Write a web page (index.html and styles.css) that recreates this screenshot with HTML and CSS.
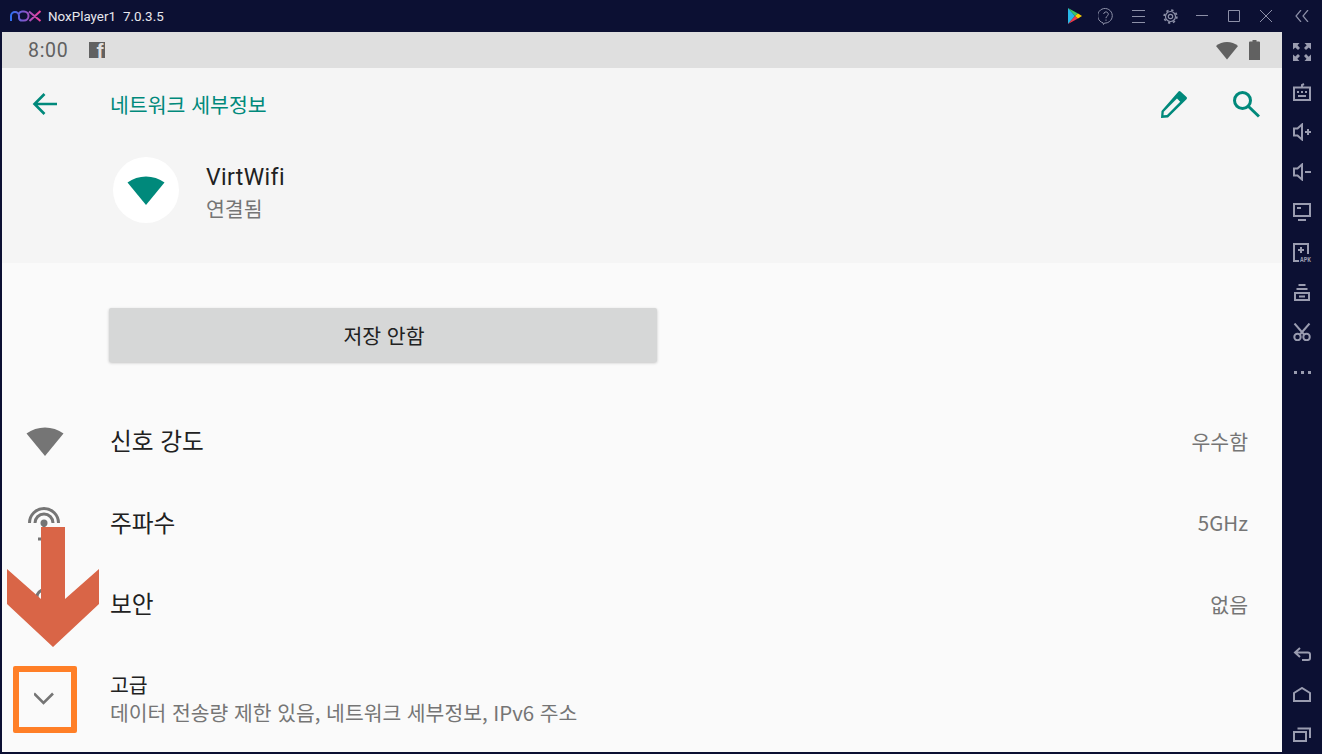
FILE: index.html
```html
<!DOCTYPE html>
<html lang="ko">
<head>
<meta charset="utf-8">
<title>NoxPlayer1</title>
<link rel="stylesheet" href="styles.css">
</head>
<body>
<div class="window">
  <header class="titlebar">
    <div class="brand">
      <svg class="logo" width="32" height="12" viewBox="0 0 32 12" fill="none" stroke-width="2"><defs><linearGradient id="lg" x1="0" x2="1" y1="0" y2="0"><stop offset="0" stop-color="#2f6ff0"/><stop offset=".5" stop-color="#8a55c8"/><stop offset="1" stop-color="#f0409a"/></linearGradient></defs><path d="M1 11V6a4 4 0 0 1 8 0v2a3 3 0 0 0 3 2.500h2a4 4 0 0 0 0-9h-2a3.500 3.500 0 0 0-3 2M19 1.500 30.500 11M30.500 1 19.500 11" stroke="url(#lg)"/></svg>
      <span class="brand-name">NoxPlayer1</span>
      <span class="brand-ver">7.0.3.5</span>
    </div>
    <div class="win-controls">
      <svg class="wc" width="14" height="16" viewBox="0 0 14 16"><path d="M0 0l7 8-7 8z" fill="#28b8e8"/><path d="M0 0l10 5.500L7 8z" fill="#3cc66a"/><path d="M0 16l10-5.500L7 8z" fill="#ee3c4c"/><path d="M10 5.500L14 8l-4 2.500L7 8z" fill="#fcd000"/></svg>
      <svg class="wc" width="16" height="17" viewBox="0 0 16 17" fill="none" stroke="#8d90a8" stroke-width="1"><path d="M5 14.800A7.300 7.300 0 1 1 8 15H6.500l-1 1.500z"/><path d="M5.700 6a2.300 2.300 0 1 1 3.400 2.200c-.8.500-1.100 1-1.100 2M8 11.500v1.300"/></svg>
      <svg class="wc" width="13" height="13" viewBox="0 0 13 13" fill="none" stroke="#8d90a8" stroke-width="1"><path d="M0 .5h13M0 6.500h13M0 12.500h13"/></svg>
      <svg class="wc" width="15" height="15" viewBox="0 0 15 15" fill="none" stroke="#8d90a8" stroke-width="1.200"><circle cx="7.500" cy="7.500" r="2.200"/><circle cx="7.500" cy="7.500" r="5"/><circle cx="7.500" cy="7.500" r="6.400" stroke-width="1.600" stroke-dasharray="2.300 2.720"/></svg>
      <svg class="wc" width="12" height="12" viewBox="0 0 12 12" fill="none" stroke="#8d90a8"><path d="M0 5.500h12"/></svg>
      <svg class="wc" width="12" height="12" viewBox="0 0 12 12" fill="none" stroke="#8d90a8"><path d="M.5.500h11v11H.5z"/></svg>
      <svg class="wc" width="12" height="12" viewBox="0 0 12 12" fill="none" stroke="#8d90a8"><path d="M0 0l12 12M12 0L0 12"/></svg>
      <svg class="wc" width="14" height="12" viewBox="0 0 14 12" fill="none" stroke="#8d90a8" stroke-width="1.200"><path d="M6 0L1 6l5 6M13 0L8 6l5 6"/></svg>
    </div>
  </header>
  <div class="body-row">
    <main class="screen">
      <div class="status">
        <div class="status-left">
          <span class="clock">8:00</span>
          <span class="fb">f</span>
        </div>
        <div class="status-right">
          <svg width="22" height="20" viewBox="0 0 22 20"><path class="fill-dark" d="M0 6C6 .7 16 .7 22 6L11 19.500z"/></svg>
          <svg width="11" height="20" viewBox="0 0 11 20"><path class="fill-dark" d="M3.500 0h4v1.500h2.500a1 1 0 0 1 1 1V20H0V2.500a1 1 0 0 1 1-1h2.500z"/></svg>
        </div>
      </div>
      <section class="head">
        <div class="appbar">
          <svg class="back" width="26" height="24" viewBox="0 0 26 24" fill="none" stroke="#00897b" stroke-width="2.600"><path d="M25 12H3M12.500 2L2.500 12l10 10"/></svg>
          <h1 class="title">네트워크 세부정보</h1>
          <svg class="pencil" width="28" height="29" viewBox="0 0 28 29"><path d="M20.500 1.500L26.500 7a1.500 1.500 0 0 1 0 2.200L8 27.500 1 28l.5-7L18.500 1.500a1.500 1.500 0 0 1 2 0z" fill="#00897b"/><path d="M3.800 21.800L17 8.500l3.200 3.200L7 25l-3.500.3z" fill="#f5f5f5"/></svg>
          <svg class="search" width="28" height="28" viewBox="0 0 28 28" fill="none" stroke="#00897b" stroke-width="3"><circle cx="10.500" cy="10.500" r="8"/><path d="M16 16l11 10.500"/></svg>
        </div>
        <div class="net">
          <div class="net-badge"><svg width="38" height="30" viewBox="0 0 38 30"><path d="M.500 7.500C11-.5 27-.5 37.500 7.500L19 30z" fill="#00897b"/></svg></div>
          <div class="net-text">
            <div class="net-name">VirtWifi</div>
            <div class="net-state">연결됨</div>
          </div>
        </div>
      </section>
      <div class="action"><button class="btn" type="button">저장 안함</button></div>
      <ul class="rows">
        <li class="row">
          <span class="row-icon"><svg width="38" height="30" viewBox="0 0 38 30"><path d="M.500 7.500C11-.5 27-.5 37.500 7.500L19 30z" fill="#757575"/></svg></span>
          <span class="row-label">신호 강도</span>
          <span class="row-value">우수함</span>
        </li>
        <li class="row">
          <span class="row-icon"><svg width="36" height="36" viewBox="1 0 36 36" fill="none" stroke="#757575" stroke-width="3"><path d="M3.500 18a14.500 14.500 0 0 1 29 0M9 18a9 9 0 0 1 18 0"/><circle cx="18" cy="18" r="3.500" fill="#757575" stroke="none"/><path d="M18 20v14M12 34h12"/></svg></span>
          <span class="row-label">주파수</span>
          <span class="row-value">5GHz</span>
        </li>
        <li class="row">
          <span class="row-icon"><svg width="32" height="36" viewBox="1 0 32 36"><path d="M9 15v-4a7 7 0 0 1 14 0v4" fill="none" stroke="#757575" stroke-width="3"/><rect x="5" y="15" width="22" height="18" rx="2" fill="#757575"/></svg></span>
          <span class="row-label">보안</span>
          <span class="row-value">없음</span>
        </li>
        <li class="row row-adv">
          <span class="row-icon"><svg width="22" height="13" viewBox="1.500 0 22 13" fill="none" stroke="#757575" stroke-width="2.600"><path d="M1.500 1.500L11 11l9.500-9.500"/></svg></span>
          <span class="adv-text">
            <span class="adv-title">고급</span>
            <span class="adv-sub">데이터 전송량 제한 있음, 네트워크 세부정보, IPv6 주소</span>
          </span>
        </li>
      </ul>
      <div class="mark-box"></div>
      <svg class="mark-arrow" width="92" height="120" viewBox="0 0 92 120"><path d="M34 0h24v72l34-30v35l-46 43L0 77V42l34 30z" fill="#d96547"/></svg>
    </main>
    <aside class="side">
      <div class="side-group">
        <span class="slot"><svg width="18" height="18" viewBox="1 1 18 18" fill="#9a9cb0"><path d="M1 1h6.500L5.500 3.300 8 6 6 8 3.300 5.500 1 7.500zM19 1v6.500l-2.300-2L14 8l-2-2 2.700-2.700L12.500 1zM1 19v-6.500l2.300 2L6 12l2 2-2.700 2.700L7.500 19zM19 19h-6.500l2-2.300L12 14l2-2 2.700 2.700 2.300-2.200z"/></svg></span>
        <span class="slot"><svg width="18" height="18" viewBox="0 0 18 18" fill="none" stroke="#9a9cb0" stroke-width="2"><path d="M1 4.500h16V17H1zM9 4.500V2l2-1M4 9h2M8 9h2M12 9h2M5 13h8"/></svg></span>
        <span class="slot"><svg width="18" height="18" viewBox="0 0 18 18" fill="none" stroke="#9a9cb0" stroke-width="2"><path d="M1 5.500h3.500L9 1.500v15l-4.500-4H1zM12 9h6M15 6v6"/></svg></span>
        <span class="slot"><svg width="18" height="18" viewBox="0 0 18 18" fill="none" stroke="#9a9cb0" stroke-width="2"><path d="M1 5.500h3.500L9 1.500v15l-4.500-4H1zM12 9h6"/></svg></span>
        <span class="slot"><svg width="18" height="18" viewBox="0 0 18 18" fill="none" stroke="#9a9cb0" stroke-width="2"><path d="M1 1h16v12H1zM4 5h4M5 17h8"/></svg></span>
        <span class="slot"><svg class="apk" width="22" height="24" viewBox="0 0 22 24" fill="none" stroke="#9a9cb0" stroke-width="2"><path d="M15 11V1H1v17h5M8 4v6M5 7h6"/><text x="7" y="18.500" class="apk-text" textLength="11" lengthAdjust="spacingAndGlyphs">APK</text></svg></span>
        <span class="slot"><svg width="16" height="17" viewBox="0 0 16 17" fill="none" stroke="#9a9cb0" stroke-width="2"><path d="M4.500 1h7M2.500 5h11M1 9h14v7H1zM5 12.500h6"/></svg></span>
        <span class="slot"><svg width="18" height="18" viewBox="0 0 18 18" fill="none" stroke="#9a9cb0" stroke-width="2"><path d="M1.500 .5L11.500 12M16.500 .5L6.500 12"/><circle cx="4.500" cy="14" r="3.200"/><circle cx="13.500" cy="14" r="3.200"/></svg></span>
        <span class="slot"><svg width="17" height="3" viewBox="0 0 17 3" fill="#9a9cb0"><path d="M0 0h3v3H0zM7 0h3v3H7zM14 0h3v3h-3z"/></svg></span>
      </div>
      <div class="side-group">
        <span class="slot"><svg width="18" height="14" viewBox="0 0 18 14" fill="none" stroke="#9a9cb0" stroke-width="2"><path d="M7 1L2 5.500 7 10M2 5.500h13a2 2 0 0 1 2 2v3.500a2 2 0 0 1-2 2H9"/></svg></span>
        <span class="slot"><svg width="18" height="15" viewBox="0 0 18 15" fill="none" stroke="#9a9cb0" stroke-width="2"><path d="M1 6L9 1l8 5v8H1z"/></svg></span>
        <span class="slot"><svg width="18" height="15" viewBox="0 0 18 15" fill="none" stroke="#9a9cb0" stroke-width="2"><path d="M1 5h12v9H1zM4.500 1.500H17V11"/></svg></span>
      </div>
    </aside>
  </div>
</div>
</body>
</html>
```
FILE: styles.css
```css
* { box-sizing: border-box; }
html, body { margin: 0; padding: 0; }
body { width: 1322px; height: 754px; overflow: hidden; background: #0c1033; font-family: "Noto Sans CJK KR", "Noto Sans", sans-serif; }
.window { display: flex; flex-direction: column; width: 1322px; height: 754px; }

.titlebar { display: flex; justify-content: space-between; align-items: center; height: 32px; background: #0c1033; flex: none; }
.brand { display: flex; align-items: center; padding-left: 10px; color: #e8e8ee; font: 13.4px "Roboto", sans-serif; }
.logo { margin-right: 6px; }
.brand-ver { margin-left: 7px; }
.win-controls { display: flex; align-items: center; padding-right: 13px; }
.wc { display: block; flex: none; }
.wc:nth-child(1) { margin-right: 16px; }
.wc:nth-child(2) { margin-right: 18px; }
.wc:nth-child(3) { margin-right: 18px; }
.wc:nth-child(4) { margin-right: 18px; }
.wc:nth-child(5) { margin-right: 20px; }
.wc:nth-child(6) { margin-right: 20px; }
.wc:nth-child(7) { margin-right: 23px; }

.body-row { display: flex; flex: 1; min-height: 0; }
.screen { position: relative; width: 1280px; height: 720px; margin-left: 2px; background: #fafafa; flex: none; overflow: hidden; }

.status { display: flex; justify-content: space-between; align-items: center; height: 36px; background: #dfdfdf; padding: 0 22px 0 26px; }
.status-left { display: flex; align-items: center; }
.clock { font: 19.500px "Roboto", sans-serif; letter-spacing: .7px; color: #616161; }
.fb { display: block; width: 16px; height: 16px; margin-left: 21px; background: #616161; color: #dfdfdf; font: bold 21px/17px "Liberation Sans", sans-serif; text-align: right; padding-right: 2px; }
.status-right { display: flex; align-items: center; gap: 11px; }
.status-right svg { display: block; }
.fill-dark { fill: #616161; }

.head { height: 195px; background: #f5f5f5; }
.appbar { display: flex; align-items: center; height: 72px; padding: 0 22px 0 30px; }
.back { flex: none; }
.title { margin: 0 0 0 52px; flex: 1; font-size: 20.500px; font-weight: 400; color: #00897b; line-height: 1; }
.pencil { margin-right: 44px; }
.net { display: flex; align-items: center; margin-top: 17px; padding-left: 111px; }
.net-badge { display: flex; align-items: center; justify-content: center; width: 66px; height: 66px; border-radius: 50%; background: #fff; }
.net-text { margin-left: 27px; padding-top: 6px; }
.net-name { font: 23px/28px "Roboto", sans-serif; letter-spacing: .4px; color: #212121; }
.net-state { font-size: 20.500px; line-height: 28px; color: #757575; margin-top: 2px; }

.action { padding: 45px 0 0 107px; }
.btn { display: block; width: 548px; height: 54px; border: 0; border-radius: 2px; background: #d6d7d7; box-shadow: 0 1px 3px rgba(0,0,0,.22); font: 20.500px "Noto Sans CJK KR", sans-serif; color: #212121; padding: 0 0 0 2px; }

.rows { list-style: none; margin: 38.300px 0 0; padding: 0; }
.row { display: flex; align-items: center; height: 81.500px; padding-right: 34px; }
.row-icon { display: flex; align-items: center; justify-content: center; width: 86px; margin-right: 22px; flex: none; }
.row-label { flex: 1; font-size: 23.700px; color: #212121; line-height: 1; }
.row-value { font-size: 20.500px; color: #757575; line-height: 1; }
.row-adv { height: 107px; }
.adv-text { display: flex; flex-direction: column; }
.adv-title { font-size: 20.500px; line-height: 28px; color: #212121; }
.adv-sub { font-size: 20.400px; line-height: 28px; color: #757575; }

.mark-box { position: absolute; left: 11px; top: 634px; width: 64px; height: 67px; border: 6px solid #ff7f27; border-radius: 2px; }
.mark-arrow { position: absolute; left: 5px; top: 495px; }

.side { display: flex; flex-direction: column; justify-content: space-between; width: 40px; flex: none; }
.side-group { display: flex; flex-direction: column; }
.slot { display: flex; align-items: center; justify-content: center; height: 40px; }
.side svg { display: block; }
.side .apk { margin: 6px 0 0 4px; flex: none; }
.apk-text { font: bold 7.500px "Liberation Mono", monospace; fill: #9a9cb0; stroke: none; }
```
